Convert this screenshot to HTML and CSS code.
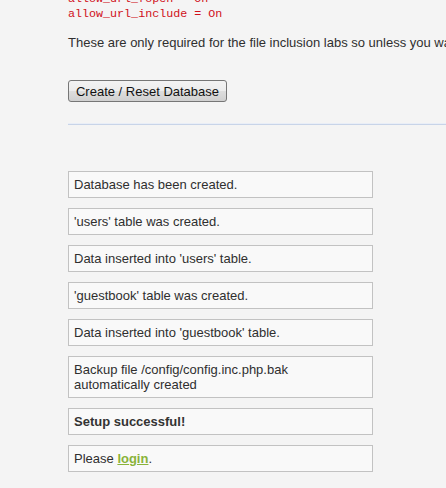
FILE: index.html
```html
<!DOCTYPE html>
<html>
<head>
<meta charset="utf-8">
<link rel="stylesheet" href="styles.css">
</head>
<body>
<div class="page">
  <pre class="code">allow_url_fopen = On
allow_url_include = On</pre>
  <p class="note">These are only required for the file inclusion labs so unless you want to play with them, you can ignore them.</p>
  <form class="setup-form">
    <button type="button" class="btn">Create / Reset Database</button>
  </form>
  <div class="rule"></div>
  <div class="messages">
    <div class="message">Database has been created.</div>
    <div class="message">'users' table was created.</div>
    <div class="message">Data inserted into 'users' table.</div>
    <div class="message">'guestbook' table was created.</div>
    <div class="message">Data inserted into 'guestbook' table.</div>
    <div class="message">Backup file /config/config.inc.php.bak<br>automatically created</div>
    <div class="message"><strong>Setup successful!</strong></div>
    <div class="message">Please <a href="#" class="link">login</a>.</div>
  </div>
</div>
</body>
</html>
```
FILE: styles.css
```css
html, body {
  margin: 0;
  padding: 0;
  overflow: hidden;
  background: #f4f4f4;
}
body {
  font-family: "Liberation Sans", Arial, sans-serif;
  font-size: 13px;
  color: #2f2f2f;
}
.page {
  padding-left: 68px;
}
.code {
  margin: -8px 0 0 0;
  font-family: "Liberation Mono", "DejaVu Sans Mono", monospace;
  font-size: 11.7px;
  line-height: 15px;
  color: #d0101a;
}
.note {
  margin: 13px 0 0 0;
  line-height: 15px;
  white-space: nowrap;
}
.setup-form {
  margin: 30px 0 0 0;
}
.btn {
  display: block;
  height: 22px;
  width: 159px;
  padding: 0;
  font-family: "Liberation Sans", Arial, sans-serif;
  font-size: 13px;
  color: #111;
  border: 1px solid #767676;
  border-radius: 3px;
  background: linear-gradient(#f3f3f3, #ececec 50%, #dedede 50%, #d0d0d0);
}
.rule {
  margin-top: 21px;
  height: 1px;
  background: #e9eef7;
  border-bottom: 1px solid #c8d4e8;
}
.messages {
  margin-top: 46px;
  display: flex;
  flex-direction: column;
  gap: 10px;
  width: 305px;
}
.message {
  border: 1px solid #c2c2c2;
  background: #f9f9f9;
  padding: 5px 5px;
  line-height: 15px;
}
.message strong {
  font-weight: bold;
  color: #333;
}
.link {
  color: #8ab33a;
  font-weight: bold;
  text-decoration: underline;
}
```
